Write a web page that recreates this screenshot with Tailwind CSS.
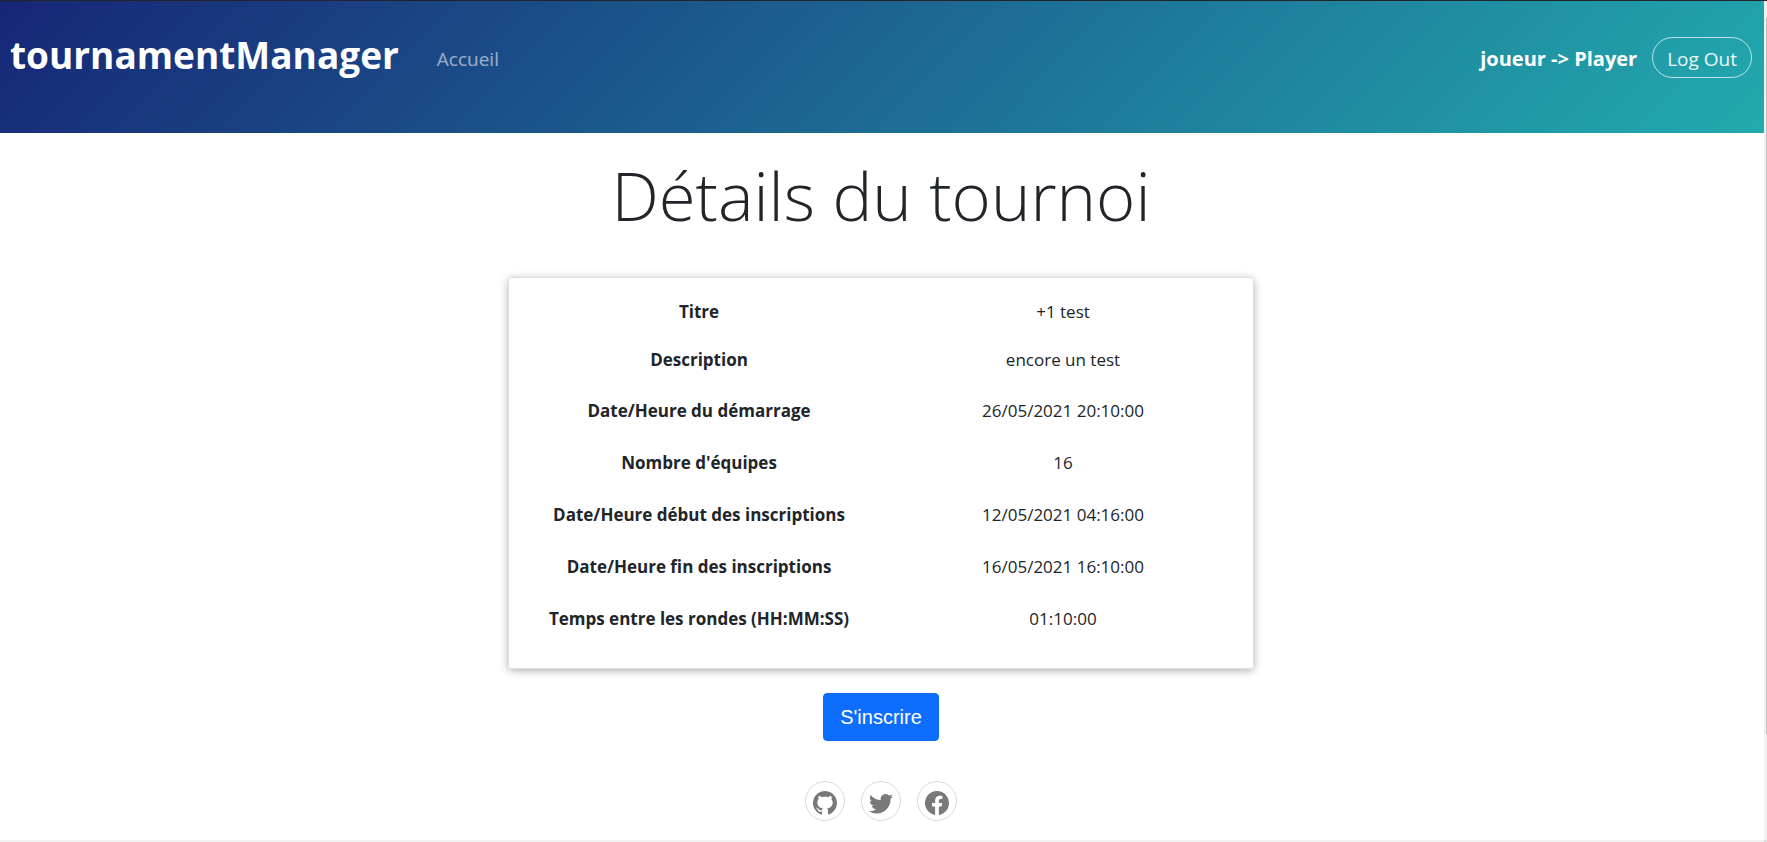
<!DOCTYPE html>
<html lang="fr">
<head>
<meta charset="utf-8">
<meta name="viewport" content="width=device-width, initial-scale=1">
<title>tournamentManager</title>
<script src="https://cdn.jsdelivr.net/npm/@tailwindcss/browser@4"></script>
</head>
<body class="flex min-h-screen flex-col bg-white font-['Open_Sans','Noto_Sans',sans-serif] text-[#212529]">
<div class="flex grow">
  <div class="flex min-w-0 grow flex-col">
    <header class="border-t border-[#212529] bg-linear-[135deg,#172677,#22aaae] bg-origin-border pb-12">
      <nav class="flex items-start justify-between pt-6 pr-3 pl-2.5">
        <div class="flex items-start gap-[38px]">
          <a href="#" class="text-[37px] leading-[60px] font-bold text-white">tournamentManager</a>
          <a href="#" class="pt-5 text-[19px] leading-7 text-white/55">Accueil</a>
        </div>
        <div class="flex items-start gap-[15px] pt-3">
          <span class="pt-2 text-[20px] leading-7 font-bold text-white">joueur -&gt; Player</span>
          <button type="button" class="h-[41px] rounded-full border border-white/70 px-3.5 pt-0.5 text-[19px] leading-7 text-white/90">Log Out</button>
        </div>
      </nav>
    </header>
    <main class="flex flex-col items-center pt-3.5 pr-0.5">
      <h1 class="text-[67px] leading-24 font-light">Détails du tournoi</h1>
      <section class="mt-[34px] w-full max-w-[746px] rounded border border-[#dfdfdf] pt-2.5 pb-6 shadow-[0_2px_8px_rgba(0,0,0,0.3)]">
        <table class="w-full table-fixed text-center text-[17px] leading-6">
          <tbody>
            <tr class="h-12"><th scope="row" class="w-[380px] font-bold">Titre</th><td class="pr-4">+1 test</td></tr>
            <tr class="h-12"><th scope="row" class="font-bold">Description</th><td class="pr-4">encore un test</td></tr>
            <tr class="h-[52px]"><th scope="row" class="pt-0.5 font-bold">Date/Heure du démarrage</th><td class="pt-0.5 pr-4">26/05/2021 20:10:00</td></tr>
            <tr class="h-[52px]"><th scope="row" class="pt-0.5 font-bold">Nombre d'équipes</th><td class="pt-0.5 pr-4">16</td></tr>
            <tr class="h-[52px]"><th scope="row" class="pt-0.5 font-bold">Date/Heure début des inscriptions</th><td class="pt-0.5 pr-4">12/05/2021 04:16:00</td></tr>
            <tr class="h-[52px]"><th scope="row" class="pt-0.5 font-bold">Date/Heure fin des inscriptions</th><td class="pt-0.5 pr-4">16/05/2021 16:10:00</td></tr>
            <tr class="h-[52px]"><th scope="row" class="pt-0.5 font-bold">Temps entre les rondes (HH:MM:SS)</th><td class="pt-0.5 pr-4">01:10:00</td></tr>
          </tbody>
        </table>
      </section>
      <button type="button" class="mt-6 h-12 rounded border border-[#0d6efd] bg-[#0d6efd] px-4 font-['Liberation_Sans',sans-serif] text-xl text-white">S'inscrire</button>
    </main>
    <footer class="flex justify-center gap-4 pt-10 pr-0.5 pb-4 text-[#77797b]">
      <a href="#" aria-label="GitHub" class="flex size-10 items-center justify-center rounded-full border border-[#d8d9da] pt-1">
        <svg class="size-6" viewBox="0 0 16 16" fill="currentColor"><path d="M8 0C3.58 0 0 3.58 0 8c0 3.54 2.29 6.53 5.47 7.59.4.07.55-.17.55-.38 0-.19-.01-.82-.01-1.49-2.01.37-2.53-.49-2.69-.94-.09-.23-.48-.94-.82-1.13-.28-.15-.68-.52-.01-.53.63-.01 1.08.58 1.23.82.72 1.21 1.87.87 2.33.66.07-.52.28-.87.51-1.07-1.78-.2-3.64-.89-3.64-3.95 0-.87.31-1.59.82-2.15-.08-.2-.36-1.02.08-2.12 0 0 .67-.21 2.2.82.64-.18 1.32-.27 2-.27.68 0 1.36.09 2 .27 1.53-1.04 2.2-.82 2.2-.82.44 1.1.16 1.92.08 2.12.51.56.82 1.27.82 2.15 0 3.07-1.87 3.75-3.65 3.95.29.25.54.73.54 1.48 0 1.07-.01 1.93-.01 2.2 0 .21.15.46.55.38A8.012 8.012 0 0 0 16 8c0-4.42-3.58-8-8-8z"/></svg>
      </a>
      <a href="#" aria-label="Twitter" class="flex size-10 items-center justify-center rounded-full border border-[#d8d9da] pt-1">
        <svg class="size-6" viewBox="0 0 16 16" fill="currentColor"><path d="M5.026 15c6.038 0 9.341-5.003 9.341-9.334 0-.14 0-.282-.006-.422A6.685 6.685 0 0 0 16 3.542a6.658 6.658 0 0 1-1.889.518 3.301 3.301 0 0 0 1.447-1.817 6.533 6.533 0 0 1-2.087.793A3.286 3.286 0 0 0 7.875 6.03a9.325 9.325 0 0 1-6.767-3.429 3.289 3.289 0 0 0 1.018 4.382A3.323 3.323 0 0 1 .64 6.575v.045a3.288 3.288 0 0 0 2.632 3.218 3.203 3.203 0 0 1-.865.115 3.23 3.23 0 0 1-.614-.057 3.283 3.283 0 0 0 3.067 2.277A6.588 6.588 0 0 1 .78 13.58a6.32 6.32 0 0 1-.78-.045A9.344 9.344 0 0 0 5.026 15z"/></svg>
      </a>
      <a href="#" aria-label="Facebook" class="flex size-10 items-center justify-center rounded-full border border-[#d8d9da] pt-1">
        <svg class="size-6" viewBox="0 0 16 16" fill="currentColor"><path d="M16 8.049c0-4.446-3.582-8.05-8-8.05C3.58 0-.002 3.603-.002 8.05c0 4.017 2.926 7.347 6.75 7.951v-5.625h-2.03V8.05H6.75V6.275c0-2.017 1.195-3.131 3.022-3.131.876 0 1.791.157 1.791.157v1.98h-1.009c-.993 0-1.303.621-1.303 1.258v1.51h2.218l-.354 2.326H9.25V16c3.824-.604 6.75-3.934 6.75-7.951z"/></svg>
      </a>
    </footer>
  </div>
  <!-- vertical scroll track -->
  <div class="flex w-[3px] shrink-0 flex-col items-end border-t border-[#212529] bg-[#f1f1f1] pt-[17px]"><div class="h-[85vh] w-px bg-[#c1c1c1]"></div></div>
</div>
<!-- horizontal scroll track -->
<div class="flex h-0.5 justify-end bg-[#f1f1f1]"><div class="w-[3px] bg-[#dcdcdc]"></div></div>
</body>
</html>
